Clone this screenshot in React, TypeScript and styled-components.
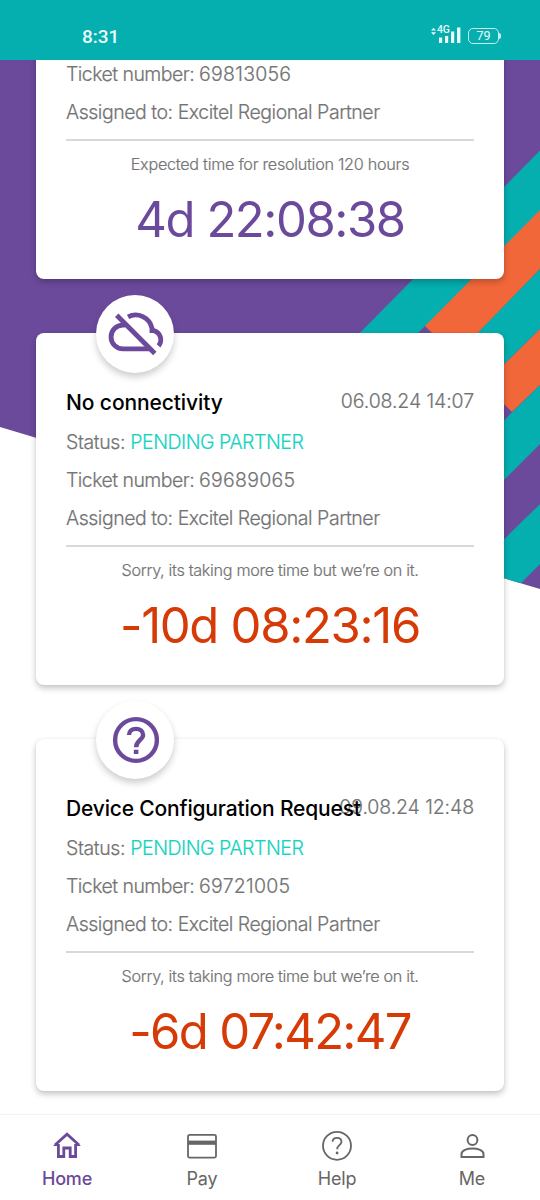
import React from 'react';
import styled, { createGlobalStyle } from 'styled-components';

const color = {
  teal: '#05aeaf',
  purple: '#6b4a9c',
  orange: '#f26739',
  red: '#d63a06',
  mint: '#14d3c1',
  gray: '#747474',
  nav: '#666666',
};

const GlobalStyle = createGlobalStyle`
  * { box-sizing: border-box; }
  body { margin: 0; background: #fff; font-family: Inter, "Liberation Sans", sans-serif; }
`;

const Screen = styled.div`
  display: flex;
  flex-direction: column;
  width: 540px;
  height: 1200px;
  overflow: hidden;
  background: #fff;
`;

const StatusBar = styled.header`
  display: flex;
  flex: none;
  align-items: center;
  justify-content: space-between;
  height: 60px;
  padding: 13px 39px 0 82px;
  background: ${color.teal};
  color: #e9fbfa;
`;

const Clock = styled.span`
  font: 500 19px/24px Roboto, sans-serif;
`;

const StatusIcons = styled.div`
  display: flex;
  align-items: center;
  gap: 7px;
  margin-top: -1px;
`;

const Network = styled.div`
  display: flex;
  align-items: flex-start;
  height: 18px;
`;

const NetworkLabel = styled.span`
  margin: -2px -11px 0 1px;
  font: 500 10.5px/10px Roboto, sans-serif;
`;

const Battery = styled.div`
  display: flex;
  align-items: center;
`;

const BatteryBody = styled.span`
  width: 31px;
  height: 16px;
  border: 1.5px solid #c5efed;
  border-radius: 5px;
  font: 400 12.5px/14px Roboto, sans-serif;
  text-align: center;
`;

const BatteryTip = styled.span`
  width: 2px;
  height: 6px;
  border-radius: 0 2px 2px 0;
  background: #c5efed;
`;

const Main = styled.main`
  display: grid;
  flex: none;
  grid-template: 1054px / 540px;
  height: 1054px;
  overflow: hidden;
`;

const Backdrop = styled.svg`
  display: block;
  grid-area: 1 / 1;
`;

const TicketList = styled.div`
  z-index: 1;
  display: flex;
  grid-area: 1 / 1;
  flex-direction: column;
  justify-content: flex-end;
  gap: 54px;
  padding: 0 36px 23px;
`;

const Card = styled.article<{ $continued?: boolean }>`
  position: relative;
  display: flex;
  flex: none;
  flex-direction: column;
  height: ${p => (p.$continued ? 225 : 352)}px;
  padding: ${p => (p.$continued ? 0 : 51)}px 30px 0;
  border-radius: ${p => (p.$continued ? '0 0 8px 8px' : '8px')};
  background: #fff;
  box-shadow: 0 3px 6px rgba(0, 0, 0, 0.24), 0 0 2px rgba(0, 0, 0, 0.06);
`;

const CardBadge = styled.div`
  position: absolute;
  top: -38.5px;
  left: 60px;
  display: grid;
  place-items: center;
  width: 78px;
  height: 78px;
  border-radius: 50%;
  background: #fff;
  color: ${color.purple};
  box-shadow: 0 4px 7px rgba(0, 0, 0, 0.2);
`;

const Row = styled.div`
  display: flex;
  height: 38px;
  color: ${color.gray};
  font-size: 19.5px;
  font-weight: 300;
  line-height: 40px;
  letter-spacing: -0.47px;
  white-space: pre;
  -webkit-text-stroke-width: 0.2px;
`;

const Label = styled.span<{ $spacing: number }>`
  letter-spacing: ${p => p.$spacing}px;
`;

const Digits = styled.span`
  letter-spacing: 0.25px;
`;

const Title = styled.h2<{ $spacing: number }>`
  z-index: 1;
  flex: 1 1 0;
  min-width: 0;
  margin: 0;
  color: #000;
  font-size: 21px;
  font-weight: 500;
  line-height: 37px;
  letter-spacing: ${p => p.$spacing}px;
  -webkit-text-stroke-width: 0;
`;

const Opened = styled.time`
  flex: none;
  line-height: 34px;
  letter-spacing: -0.1px;
`;

const Status = styled.span`
  color: ${color.mint};
`;

const Divider = styled.hr`
  flex: none;
  width: 100%;
  height: 2px;
  margin: 9px 0 0;
  border: 0;
  background: #d9d9d9;
`;

const Note = styled.p<{ $spacing: number }>`
  margin: 11px 0 0;
  color: ${color.gray};
  font-size: 16.2px;
  font-weight: 300;
  line-height: 25px;
  letter-spacing: ${p => p.$spacing}px;
  text-align: center;
  white-space: nowrap;
  -webkit-text-stroke-width: 0.2px;
`;

const Timer = styled.p<{ $late: boolean; $spacing: number }>`
  margin: 13px 0 0;
  color: ${p => (p.$late ? color.red : color.purple)};
  font-size: 49px;
  line-height: 60px;
  letter-spacing: ${p => p.$spacing}px;
  text-align: center;
  white-space: nowrap;
`;

const NavBar = styled.nav`
  display: grid;
  flex: none;
  grid-template-columns: repeat(4, 135px);
  height: 86px;
  border-top: 1px solid #f3f3f3;
  background: #fff;
`;

const NavItem = styled.a<{ $active?: boolean }>`
  display: flex;
  flex-direction: column;
  align-items: center;
  gap: 4px;
  padding: 15px 1px 0 0;
  color: ${p => (p.$active ? color.purple : color.nav)};
  font-size: 18px;
  font-weight: ${p => (p.$active ? 500 : 400)};
  line-height: 26px;
  letter-spacing: -0.2px;
`;

const CloudOff = () => (
  <svg width="63" height="63" viewBox="0.5 0 60 60" fill="none" stroke="currentColor" strokeWidth="4.6">
    <path d="M20.5 22H18.5A11.3 11.3 0 0 0 18.5 44.6H44" />
    <path d="M23.4 14.1A16 16 0 0 1 46.2 25V27.3H48A9 9 0 0 1 52.4 41.8" />
    <path d="M12.6 12.6 48.9 49" />
  </svg>
);

const QuestionBadge = () => (
  <svg width="48" height="48" viewBox="0 0 48 48" fill="none" stroke="currentColor">
    <circle cx="25" cy="24" r="20.9" strokeWidth="4.4" />
    <path d="M18 19C18 15 21 12.9 25 12.9S32.1 15.2 32.1 19C32.1 23.6 25.1 24.6 25.1 31.2" strokeWidth="4.4" />
    <path d="M25.1 33.7V38" strokeWidth="4.6" />
  </svg>
);

const HomeIcon = () => (
  <svg width="30" height="32" viewBox="0 0 30 32" fill="none" stroke="currentColor" strokeWidth="2.8">
    <path d="M6.4 14V26.5H11.8V18H18.2V26.5H23.6V14M3 15 15 4.2 27 15" />
    <path d="M1 16 5 12.5V16ZM29 16 25 12.5V16Z" fill="currentColor" stroke="none" />
  </svg>
);

const PayIcon = () => (
  <svg width="30" height="32" viewBox="0 0 30 32" fill="none" stroke="currentColor" strokeWidth="1.8">
    <rect x="1" y="4.9" width="28" height="22.7" rx="1.5" />
    <path d="M1 12.7H29" strokeWidth="4.2" />
  </svg>
);

const HelpIcon = () => (
  <svg width="30" height="32" viewBox="0 0 30 32" fill="none" stroke="currentColor" strokeWidth="1.8">
    <circle cx="15" cy="15.8" r="14" />
    <path d="M10.6 11.8C10.6 9.2 12.5 7.8 15 7.8S19.5 9.2 19.5 11.7C19.5 15 15.1 15.4 15.1 19.2" />
    <circle cx="15.1" cy="23" r="1.4" fill="currentColor" stroke="none" />
  </svg>
);

const MeIcon = () => (
  <svg width="30" height="32" viewBox="0 0 30 32" fill="none" stroke="currentColor" strokeWidth="2">
    <circle cx="15.5" cy="10" r="4.9" />
    <path d="M4.5 27V24C4.5 20.3 10 18.5 15.5 18.5S26.5 20.3 26.5 24V27Z" />
  </svg>
);

const SignalIcon = () => (
  <svg width="22" height="18" viewBox="0 0 22 18" fill="currentColor">
    <rect x="0" y="10.5" width="3.2" height="5.5" />
    <rect x="6" y="9" width="3.2" height="7" />
    <rect x="12" y="4.5" width="3.2" height="11.5" />
    <rect x="18" y="0.5" width="3.4" height="15.5" />
  </svg>
);

const DataArrows = () => (
  <svg width="5" height="9" viewBox="0 0 5 9" fill="currentColor">
    <path d="M0 3.6 2.5 0.8 5 3.6ZM0 5.2H5L2.5 8Z" />
  </svg>
);

const Stripes = () => (
  <Backdrop width="540" height="1054" viewBox="0 60 540 1054">
    <defs>
      <clipPath id="slope">
        <path d="M0 60H540V589L0 427Z" />
      </clipPath>
    </defs>
    <g clipPath="url(#slope)">
      <rect y="60" width="540" height="540" fill={color.purple} />
      <path d="M540 150.5 340 353H398L425 326 540 269Z" fill={color.teal} />
      <path d="M540 210 425 326 445 346 475 336 540 269Z" fill={color.orange} />
      <path d="M540 269 465 346 490 378 540 329Z" fill={color.teal} />
      <path d="M540 329 484 384 512 412 540 385Z" fill={color.orange} />
      <path d="M540 385 490 434V494L540 444Z" fill={color.teal} />
      <path d="M540 504 490 553V610H494L540 564Z" fill={color.teal} />
    </g>
  </Backdrop>
);

type Ticket = {
  number: string;
  note: string;
  noteSpacing: number;
  timer: string;
  timerSpacing: number;
  title?: string;
  opened?: string;
  titleSpacing?: number;
  icon?: React.ReactNode;
};

const late = 'Sorry, its taking more time but we’re on it.';

const tickets: Ticket[] = [
  { number: '69813056', note: 'Expected time for resolution 120 hours', noteSpacing: -0.27, timer: '4d 22:08:38', timerSpacing: -1.45 },
  { number: '69689065', note: late, noteSpacing: -0.32, timer: '-10d 08:23:16', timerSpacing: -1.3, title: 'No connectivity', titleSpacing: -0.1, opened: '06.08.24 14:07', icon: <CloudOff /> },
  { number: '69721005', note: late, noteSpacing: -0.32, timer: '-6d 07:42:47', timerSpacing: -1.7, title: 'Device Configuration Request', titleSpacing: -0.17, opened: '09.08.24 12:48', icon: <QuestionBadge /> },
];

const TicketCard = ({ ticket }: { ticket: Ticket }) => (
  <Card $continued={!ticket.title}>
    {ticket.title && (
      <>
        <CardBadge>{ticket.icon}</CardBadge>
        <Row>
          <Title $spacing={ticket.titleSpacing ?? 0}>{ticket.title}</Title>
          <Opened>{ticket.opened}</Opened>
        </Row>
        <Row><Label $spacing={-0.38}>Status: </Label><Status>PENDING PARTNER</Status></Row>
      </>
    )}
    <Row><Label $spacing={-0.55}>Ticket number: </Label><Digits>{ticket.number}</Digits></Row>
    <Row>Assigned to: Excitel Regional Partner</Row>
    <Divider />
    <Note $spacing={ticket.noteSpacing}>{ticket.note}</Note>
    <Timer $late={ticket.timer.startsWith('-')} $spacing={ticket.timerSpacing}>{ticket.timer}</Timer>
  </Card>
);

export default function App() {
  return (
    <Screen>
      <GlobalStyle />
      <StatusBar>
        <Clock>8:31</Clock>
        <StatusIcons>
          <Network>
            <DataArrows />
            <NetworkLabel>4G</NetworkLabel>
            <SignalIcon />
          </Network>
          <Battery>
            <BatteryBody>79</BatteryBody>
            <BatteryTip />
          </Battery>
        </StatusIcons>
      </StatusBar>
      <Main>
        <Stripes />
        <TicketList>
          {tickets.map(t => <TicketCard key={t.number} ticket={t} />)}
        </TicketList>
      </Main>
      <NavBar>
        <NavItem $active><HomeIcon />Home</NavItem>
        <NavItem><PayIcon />Pay</NavItem>
        <NavItem><HelpIcon />Help</NavItem>
        <NavItem><MeIcon />Me</NavItem>
      </NavBar>
    </Screen>
  );
}
